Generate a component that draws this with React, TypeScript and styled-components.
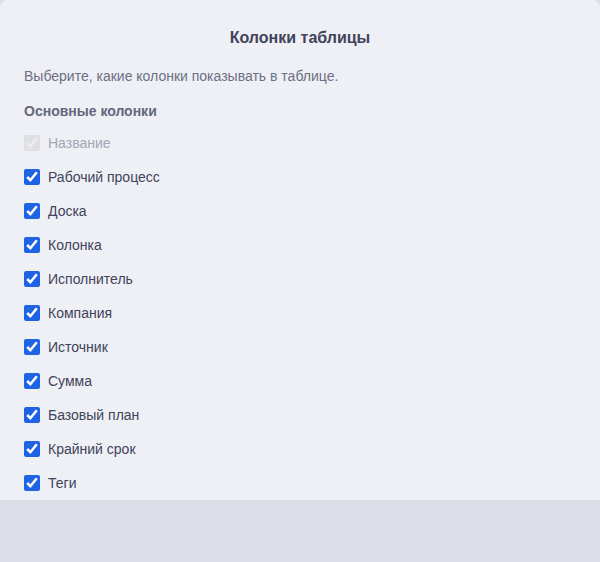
import styled, { createGlobalStyle } from "styled-components"

const GlobalStyle = createGlobalStyle`
  html, body {
    margin: 0;
    padding: 0;
    background: #dcdfe7;
  }
  body {
    font-family: "Liberation Sans", Arial, sans-serif;
  }
`

const Dialog = styled.div`
  width: 600px;
  height: 500px;
  box-sizing: border-box;
  background: #eff0f5;
  border-radius: 8px 8px 0 0;
  padding: 28px 24px 0;
  overflow: hidden;
  display: flex;
  flex-direction: column;
`

const Title = styled.h2`
  margin: 0;
  text-align: center;
  font-size: 16px;
  line-height: 20px;
  font-weight: 700;
  color: #40435a;
`

const Description = styled.p`
  margin: 18px 0 0;
  font-size: 14px;
  line-height: 20px;
  color: #6b6f85;
`

const SectionTitle = styled.h3`
  margin: 15px 0 0;
  font-size: 14px;
  line-height: 20px;
  font-weight: 700;
  color: #63677d;
`

const List = styled.div`
  display: flex;
  flex-direction: column;
  gap: 14px;
  margin-top: 12px;
`

const Row = styled.label<{ $disabled?: boolean }>`
  display: flex;
  align-items: center;
  gap: 8px;
  height: 20px;
  font-size: 14px;
  color: ${(p) => (p.$disabled ? "#a3a6b6" : "#40435a")};
  cursor: ${(p) => (p.$disabled ? "default" : "pointer")};
`

const Checkbox = styled.input.attrs({ type: "checkbox" })`
  width: 16px;
  height: 16px;
  margin: 0;
  accent-color: #1e63e4;

  &:disabled {
    opacity: 0.45;
  }
`

const columns = [
  { name: "Название", locked: true },
  { name: "Рабочий процесс" },
  { name: "Доска" },
  { name: "Колонка" },
  { name: "Исполнитель" },
  { name: "Компания" },
  { name: "Источник" },
  { name: "Сумма" },
  { name: "Базовый план" },
  { name: "Крайний срок" },
  { name: "Теги" },
]

export default function App() {
  return (
    <>
      <GlobalStyle />
      <Dialog>
        <Title>Колонки таблицы</Title>
        <Description>Выберите, какие колонки показывать в таблице.</Description>
        <SectionTitle>Основные колонки</SectionTitle>
        <List>
          {columns.map((c) => (
            <Row key={c.name} $disabled={c.locked}>
              <Checkbox defaultChecked disabled={c.locked} />
              {c.name}
            </Row>
          ))}
        </List>
      </Dialog>
    </>
  )
}
